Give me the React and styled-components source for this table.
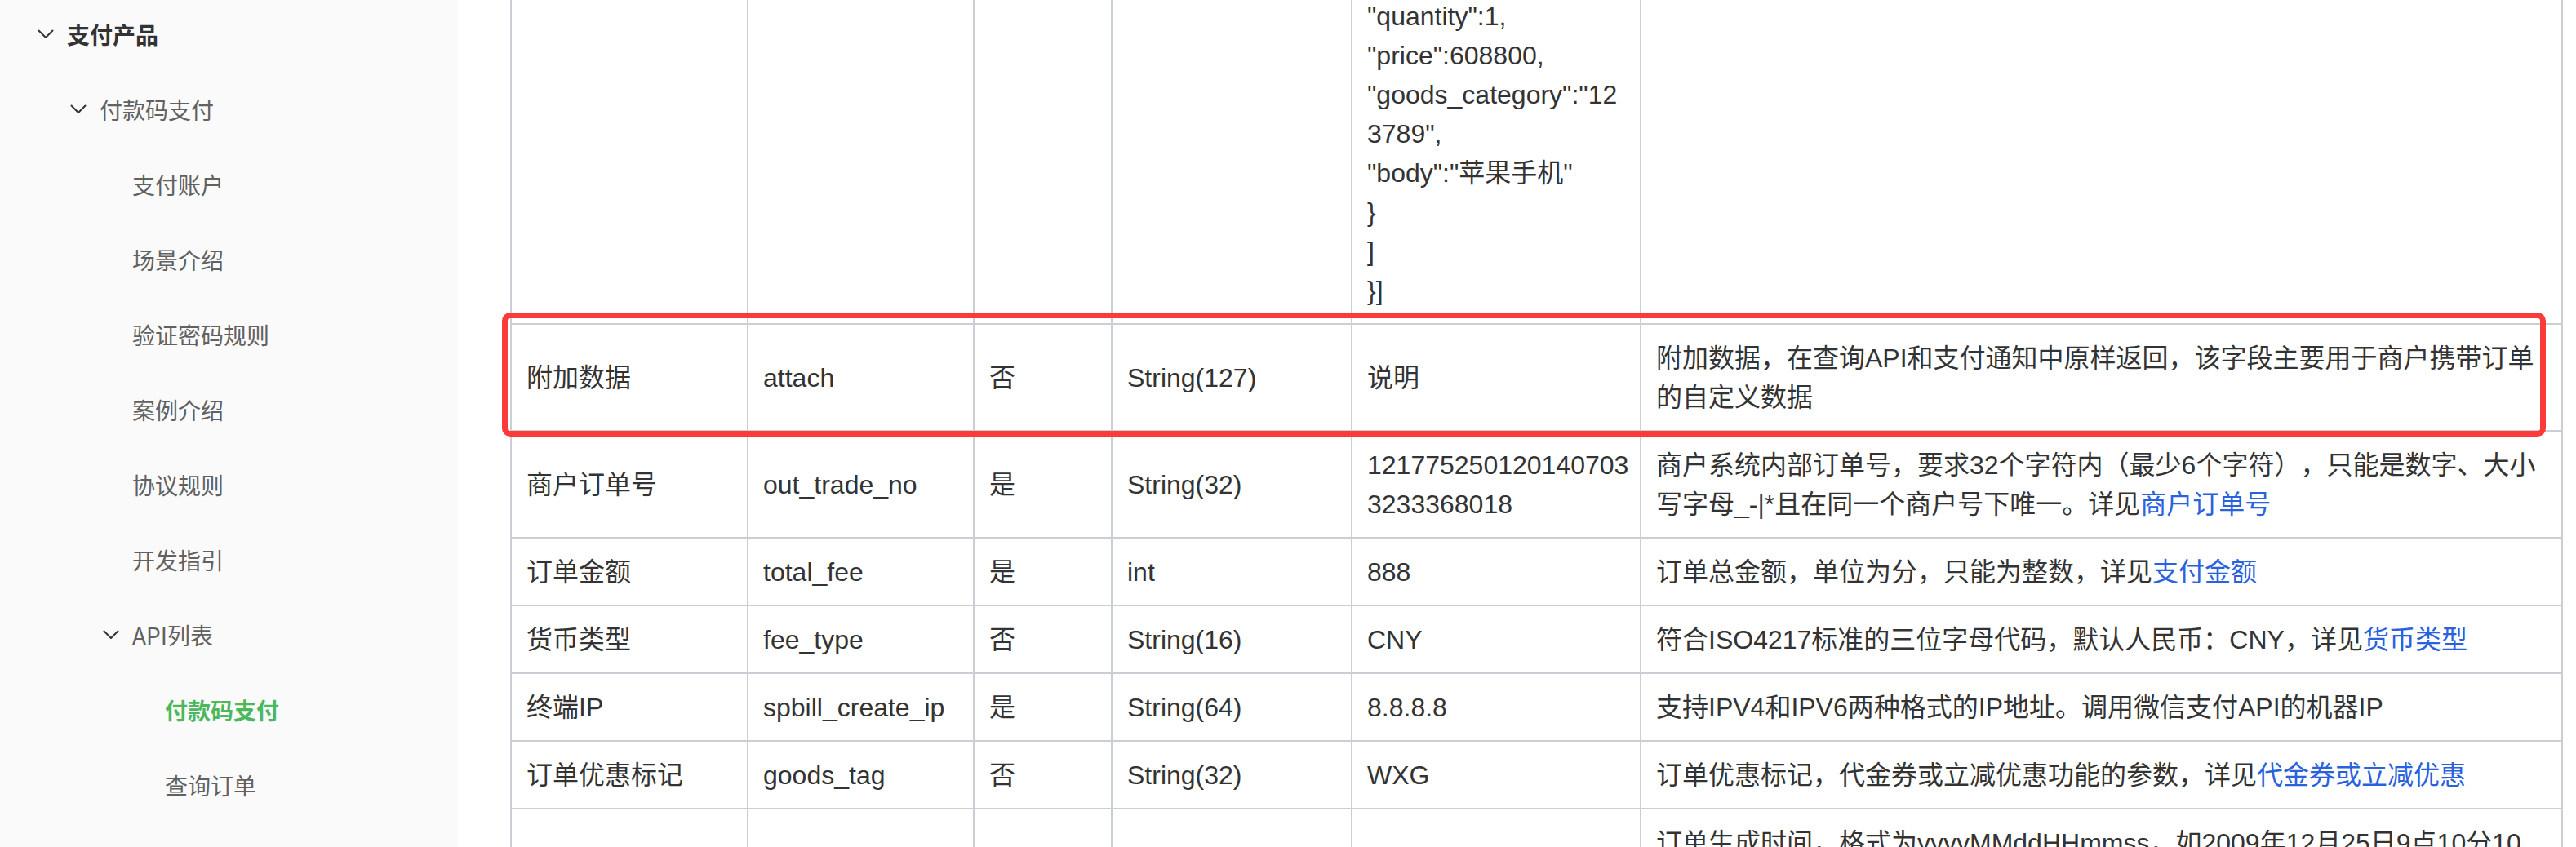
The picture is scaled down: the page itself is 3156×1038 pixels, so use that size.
import React, { useLayoutEffect, useRef } from 'react'
import styled, { createGlobalStyle } from 'styled-components'

const GlobalStyle = createGlobalStyle`
    html, body {
        margin: 0;
        padding: 0;
        overflow: hidden;
    }
    body {
        font-family: "Liberation Sans", "Noto Sans CJK SC", sans-serif;
        color: #333;
    }
`

const navItems = [
    { text: '支付产品', level: 0, open: true, top: true },
    { text: '付款码支付', level: 1, open: true },
    { text: '支付账户', level: 2 },
    { text: '场景介绍', level: 2 },
    { text: '验证密码规则', level: 2 },
    { text: '案例介绍', level: 2 },
    { text: '协议规则', level: 2 },
    { text: '开发指引', level: 2 },
    { text: 'API列表', level: 2, open: true },
    { text: '付款码支付', level: 3, active: true },
    { text: '查询订单', level: 3 },
    { text: '撤销订单', level: 3 },
    { text: '申请退款', level: 3 },
    { text: '查询退款', level: 3 },
    { text: '下载对账单', level: 3 },
    { text: '交易保障', level: 3 },
    { text: '转换短链接', level: 3 },
]

const detailLines = [
    '{',
    '"goods_detail":[',
    '{',
    '"goods_id":"iphone6s_16G",',
    '"wxpay_goods_id":"1001",',
    '"goods_name":"iPhone6s 16G",',
    '"quantity":1,',
    '"price":528800,',
    '"goods_category":"12',
    '3456",',
    '"body":"苹果手机"',
    '},',
    '{',
    '"goods_id":"iphone6s_32G",',
    '"wxpay_goods_id":"1002",',
    '"goods_name":"iPhone6s 32G",',
    '"quantity":1,',
    '"price":608800,',
    '"goods_category":"12',
    '3789",',
    '"body":"苹果手机"',
    '}',
    ']',
    '}]',
]

const rows = [
    { name: '商户订单号', key: 'out_trade_no', req: '是', type: 'String(32)', sample: '1217752501201407033233368018', desc: '商户系统内部订单号，要求32个字符内（最少6个字符），只能是数字、大小写字母_-|*且在同一个商户号下唯一。详见', link: '商户订单号' },
    { name: '订单金额', key: 'total_fee', req: '是', type: 'int', sample: '888', desc: '订单总金额，单位为分，只能为整数，详见', link: '支付金额' },
    { name: '货币类型', key: 'fee_type', req: '否', type: 'String(16)', sample: 'CNY', desc: '符合ISO4217标准的三位字母代码，默认人民币：CNY，详见', link: '货币类型' },
    { name: '终端IP', key: 'spbill_create_ip', req: '是', type: 'String(64)', sample: '8.8.8.8', desc: '支持IPV4和IPV6两种格式的IP地址。调用微信支付API的机器IP' },
    { name: '订单优惠标记', key: 'goods_tag', req: '否', type: 'String(32)', sample: 'WXG', desc: '订单优惠标记，代金券或立减优惠功能的参数，详见', link: '代金券或立减优惠' },
    { name: '交易起始时间', key: 'time_start', req: '否', type: 'String(14)', sample: '20091225091010', desc: '订单生成时间，格式为yyyyMMddHHmmss，如2009年12月25日9点10分10秒表示为20091225091010。其他详见', link: '时间规则' },
]

function Chevron() {
    return (
        <svg width="20" height="12" viewBox="0 0 20 12" fill="none">
            <path d="M1.5 1.5 L10 10 L18.5 1.5" stroke="#333" strokeWidth="2" strokeLinecap="round" strokeLinejoin="round" />
        </svg>
    )
}

function App() {
    const mainRef = useRef(null)
    const rowRef = useRef(null)

    useLayoutEffect(() => {
        // keep the highlighted row where the doc page was scrolled to
        const align = () => {
            const main = mainRef.current
            const row = rowRef.current
            if (!main || !row) return
            const delta = row.getBoundingClientRect().top - main.getBoundingClientRect().top
            main.scrollTop += delta - 397
        }
        align()
        if (document.fonts) document.fonts.ready.then(align)
    }, [])

    return (
        <Page>
            <GlobalStyle />
            <SideBar>
                <NavList>
                    {navItems.map((item, i) => (
                        <NavItem key={i} level={item.level} top={item.top} active={item.active}>
                            <ChevronSlot>{item.open && <Chevron />}</ChevronSlot>
                            <span>{item.text}</span>
                        </NavItem>
                    ))}
                </NavList>
            </SideBar>

            <Main ref={mainRef}>
                <Table>
                    <colgroup>
                        <col style={{ width: 290 }} />
                        <col style={{ width: 277 }} />
                        <col style={{ width: 169 }} />
                        <col style={{ width: 294 }} />
                        <col style={{ width: 354 }} />
                        <col />
                    </colgroup>
                    <thead>
                        <tr>
                            <Th>字段名</Th>
                            <Th>变量名</Th>
                            <Th>必填</Th>
                            <Th>类型</Th>
                            <Th>示例值</Th>
                            <Th>描述</Th>
                        </tr>
                    </thead>
                    <tbody>
                        <tr>
                            <Td>商品描述</Td>
                            <Td>body</Td>
                            <Td>是</Td>
                            <Td>String(128)</Td>
                            <Td code>image形象店-深圳腾大- QQ公仔</Td>
                            <Td desc>商品简单描述，该字段须严格按照规范传递，具体请见参数规定</Td>
                        </tr>
                        <tr>
                            <Td>单品优惠</Td>
                            <Td>detail</Td>
                            <Td>否</Td>
                            <Td>String(6000)</Td>
                            <Td code>
                                {detailLines.map((line, i) => (
                                    <CodeLine key={i}>{line}</CodeLine>
                                ))}
                            </Td>
                            <Td desc>单品优惠功能字段，需要接入详见单品优惠详细说明</Td>
                        </tr>
                        <tr ref={rowRef}>
                            <Td anchor>
                                附加数据
                                <Highlight />
                            </Td>
                            <Td>attach</Td>
                            <Td>否</Td>
                            <Td>String(127)</Td>
                            <Td code>说明</Td>
                            <Td desc>附加数据，在查询API和支付通知中原样返回，该字段主要用于商户携带订单的自定义数据</Td>
                        </tr>
                        {rows.map(row => (
                            <tr key={row.key}>
                                <Td>{row.name}</Td>
                                <Td>{row.key}</Td>
                                <Td>{row.req}</Td>
                                <Td>{row.type}</Td>
                                <Td code>{row.sample}</Td>
                                <Td desc>
                                    {row.desc}
                                    {row.link && <DocLink>{row.link}</DocLink>}
                                </Td>
                            </tr>
                        ))}
                    </tbody>
                </Table>
            </Main>
        </Page>
    )
}

export default App

const Page = styled.div`
    display: flex;
    width: 100vw;
    height: 100vh;
    background: #fff;
`
const SideBar = styled.aside`
    width: 561px;
    flex-shrink: 0;
    height: 100%;
    background: #fafafa;
    overflow-y: scroll;

    ::-webkit-scrollbar {
        width: 12px;
    }
    ::-webkit-scrollbar-track {
        background: transparent;
    }
    ::-webkit-scrollbar-thumb {
        background: #e0e0e0;
        border-radius: 6px;
    }
`
const NavList = styled.nav`
    margin-top: -4px;
    padding-bottom: 55px;
`
const NavItem = styled.div`
    display: flex;
    align-items: center;
    height: 92px;
    padding-left: ${p => 46 + p.level * 40}px;
    font-family: "Noto Sans CJK SC", sans-serif;
    font-size: 28px;
    white-space: nowrap;
    cursor: pointer;
    color: ${p => (p.active ? '#4cb75c' : p.top ? '#333' : '#616161')};
    font-weight: ${p => (p.active || p.top ? 700 : 400)};
`
const ChevronSlot = styled.span`
    display: flex;
    align-items: center;
    width: 20px;
    margin-right: 16px;
    flex-shrink: 0;
`
const Main = styled.main`
    flex: 1;
    height: 100%;
    overflow: hidden;
    padding: 0 16px 0 64px;
    box-sizing: border-box;
`
const Table = styled.table`
    width: 100%;
    table-layout: fixed;
    border-collapse: collapse;
    font-size: 32px;
    line-height: 48px;
    color: #333;
    text-spacing-trim: space-all;
`
const Th = styled.th`
    border: 2px solid #cbced5;
    padding: 16.5px 14px 16.5px 18px;
    text-align: left;
    font-weight: 700;
    background: #f6f7f9;
`
const Td = styled.td`
    position: ${p => (p.anchor ? 'relative' : 'static')};
    border: 2px solid #cbced5;
    padding: 16.5px ${p => (p.desc ? 24 : p.code ? 10 : 14)}px 16.5px 18px;
    vertical-align: middle;
    text-align: left;
    overflow-wrap: anywhere;
    word-break: ${p => (p.code ? 'break-all' : 'normal')};
`
const CodeLine = styled.div`
    white-space: pre-wrap;
`
const DocLink = styled.a`
    color: #2a62dd;
    text-decoration: none;
    cursor: pointer;
`
const Highlight = styled.div`
    position: absolute;
    top: -15px;
    left: -12px;
    width: 2504px;
    height: 152px;
    box-sizing: border-box;
    border: 7px solid #fb3a3a;
    border-radius: 10px;
    pointer-events: none;
    z-index: 1;
`
